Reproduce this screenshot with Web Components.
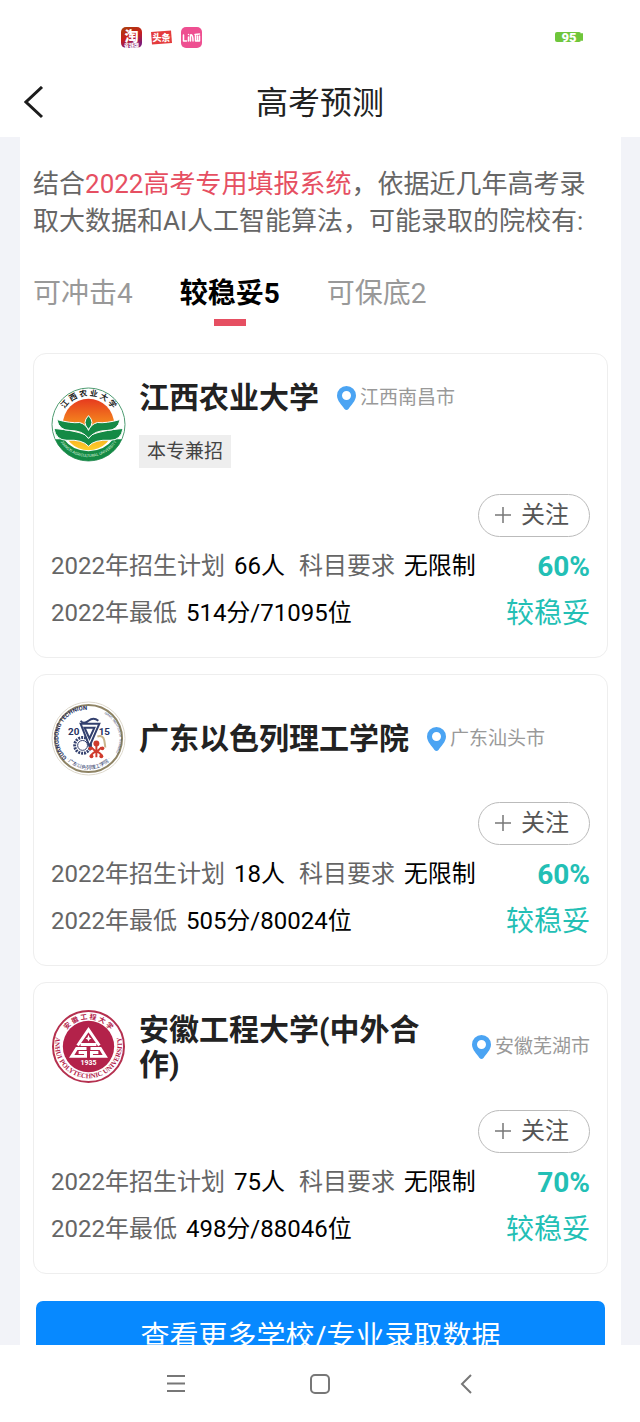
<!DOCTYPE html>
<html lang="zh-CN">
<head>
<meta charset="utf-8">
<meta name="viewport" content="width=device-width, initial-scale=1">
<title>高考预测</title>
<style>
  html, body { height: 100%; }
  body {
    margin: 0;
    display: flex;
    flex-direction: column;
    background: #fff;
    color: #666;
    font-family: Roboto, "Noto Sans CJK SC", sans-serif;
    --red: #e64f62;
    --teal: #23bfb5;
    --blue: #0789ff;
  }
  main {
    flex: 1;
    min-height: 0;
    overflow: hidden;
    background: #f2f3f8;
    padding: 0 19px 0 20px;
  }
</style>
</head>
<body>
  <status-bar level="95"></status-bar>
  <page-header>高考预测</page-header>
  <main>
    <result-panel>
      <span slot="intro">结合<em>2022高考专用填报系统</em>，依据近几年高考录取大数据和AI人工智能算法，可能录取的院校有:</span>
      <tab-strip slot="tabs" items="可冲击4,较稳妥5,可保底2" selected="1"></tab-strip>
      <school-card logo="jiangxi" city="江西南昌市" tag="本专兼招" plan="66人" subject="无限制" lowest="514分/71095位" chance="60%" level="较稳妥">江西农业大学</school-card>
      <school-card logo="guangdong" city="广东汕头市" plan="18人" subject="无限制" lowest="505分/80024位" chance="60%" level="较稳妥">广东以色列理工学院</school-card>
      <school-card logo="anhui" city="安徽芜湖市" plan="75人" subject="无限制" lowest="498分/88046位" chance="70%" level="较稳妥">安徽工程大学(中外合作)</school-card>
      <more-button slot="more">查看更多学校/专业录取数据</more-button>
    </result-panel>
  </main>
  <system-nav></system-nav>

<script>
/** Top system bar: notification icons on the left, battery on the right. */
class StatusBar extends HTMLElement {
  constructor() {
    super();
    this.attachShadow({ mode: 'open' });
  }

  connectedCallback() {
    this.shadowRoot.innerHTML = `
      <style>
        :host { display: flex; flex: none; align-items: center; justify-content: space-between; height: 74px; padding: 0 57px 0 121px; }
        .apps { display: flex; align-items: center; gap: 9px; }
        svg { display: block; overflow: visible; }
        text { font-family: "Noto Sans CJK SC", sans-serif; font-weight: 900; fill: #fff; text-anchor: middle; }
      </style>
      <div class="apps">
        <svg width="21" height="21" viewBox="0 0 21 21">
          <defs><linearGradient id="g" x1="0" y1="0" x2="0.4" y2="1">
            <stop offset="0" stop-color="#a8400c"/><stop offset="0.55" stop-color="#c81e1c"/><stop offset="1" stop-color="#7e1a78"/>
          </linearGradient></defs>
          <rect width="21" height="21" rx="5" fill="url(#g)"/>
          <text x="10.5" y="14" font-size="14">淘</text>
          <text x="10.5" y="20" font-size="5">省钱版</text>
        </svg>
        <svg width="21" height="15" viewBox="0 0 21 15">
          <path d="M0 2L20 0.500L21 13L1 14.500Z" fill="#e43b3c"/>
          <text x="10.500" y="11" font-size="9">头条</text>
        </svg>
        <svg width="21" height="21" viewBox="0 0 21 21">
          <rect width="21" height="21" rx="5" fill="#ee4f91"/>
          <path d="M2.500 8V14H5.500M7.500 10V14M7.500 7.500V7.600M9.500 14V8Q12 7 12 14M14.500 8V14H18.500V9M16.500 9V14M14 7.500L18.500 7" fill="none" stroke="#fff" stroke-width="1.500" stroke-linecap="round" stroke-linejoin="round"/>
        </svg>
      </div>
      <svg width="28" height="12" viewBox="0 0 28 12">
        <rect y="1" width="26" height="10" rx="2" fill="#6fc63b"/>
        <rect x="26" y="2" width="2" height="8" rx="1" fill="#6fc63b"/>
        <text x="14" y="11" font-size="13" style="font-family: Roboto, sans-serif">${this.getAttribute('level')}</text>
      </svg>`;
  }
}

class PageHeader extends HTMLElement {
  constructor() {
    super();
    this.attachShadow({ mode: 'open' });
  }

  connectedCallback() {
    this.shadowRoot.innerHTML = `
      <style>
        :host { display: grid; flex: none; grid-template-columns: 48px 1fr 48px; align-items: center; box-sizing: border-box; height: 63px; padding: 0 10px 5px; }
        button { display: flex; justify-content: center; padding: 0; border: 0; background: none; }
        h1 { margin: 0; color: #222; font-size: 32px; font-weight: 400; line-height: 48px; text-align: center; }
      </style>
      <button aria-label="返回">
        <svg width="20" height="34" viewBox="0 0 20 34"><path d="M18 1L2 16L18 31" fill="none" stroke="#1c1c1c" stroke-width="3"/></svg>
      </button>
      <h1><slot></slot></h1>`;
  }
}

/** White sheet that holds the intro, the tabs, the cards and the button below them. */
class ResultPanel extends HTMLElement {
  constructor() {
    super();
    this.attachShadow({ mode: 'open' });
  }

  connectedCallback() {
    this.shadowRoot.innerHTML = `
      <style>
        :host { display: block; padding: 29px 13px 0; background: #fff; }
        p { margin: 0; font-size: 26px; line-height: 37px; }
        ::slotted([slot="tabs"]) { margin: 33px 0 27px; }
        .list { display: flex; flex-direction: column; gap: 16px; }
        .more { padding: 27px 3px; }
      </style>
      <p><slot name="intro"></slot></p>
      <slot name="tabs"></slot>
      <div class="list"><slot></slot></div>
      <div class="more"><slot name="more"></slot></div>`;
    this.querySelectorAll('em').forEach((em) => {
      em.style.fontStyle = 'normal';
      em.style.color = 'var(--red)';
    });
  }
}

class TabStrip extends HTMLElement {
  constructor() {
    super();
    this.attachShadow({ mode: 'open' });
  }

  connectedCallback() {
    this.render();
    this.shadowRoot.addEventListener('click', (event) => {
      const tab = event.target.closest('button');
      if (tab) {
        this.setAttribute('selected', tab.dataset.index);
        this.render();
      }
    });
  }

  render() {
    const selected = Number(this.getAttribute('selected'));
    const tabs = this.getAttribute('items').split(',').map((item, i) =>
      `<button role="tab" data-index="${i}" aria-selected="${i === selected}">${item}</button>`);
    this.shadowRoot.innerHTML = `
      <style>
        :host { display: block; }
        div { display: flex; gap: 47px; }
        button { display: flex; flex-direction: column; align-items: center; gap: 5px; padding: 0; border: 0; background: none; color: #999; font: inherit; font-size: 28px; line-height: 41px; }
        button::after { content: ""; width: 32px; height: 7px; }
        [aria-selected="true"] { color: #000; font-weight: 700; }
        [aria-selected="true"]::after { background: var(--red); }
      </style>
      <div role="tablist">${tabs.join('')}</div>`;
  }
}

/** Round school emblems, drawn on a 76 unit square. */
const LOGOS = {
  jiangxi: `
    <defs>
      <linearGradient id="sun" x1="0" y1="0" x2="0" y2="1"><stop offset="0" stop-color="#e63a1e"/><stop offset="0.5" stop-color="#f58a1e"/><stop offset="1" stop-color="#fbd02a"/></linearGradient>
      <clipPath id="disc"><circle cx="38" cy="38" r="37"/></clipPath>
      <path id="top" d="M9 38A29 29 0 0 1 67 38"/>
      <path id="low" d="M8 53A34 34 0 0 0 68 53"/>
    </defs>
    <circle cx="38" cy="38" r="37" fill="#fff" stroke="#4c9a70"/>
    <circle cx="38" cy="38" r="26" fill="url(#sun)"/>
    <path d="M0 53H13Q22 65 38 65T63 53H76V76H0Z" fill="#148a45" clip-path="url(#disc)"/>
    <g fill="#148a45" stroke="#fff" stroke-width="1">
      <path d="M3 42Q24 44 34 48Q37 50 38 52Q39 50 42 48Q52 44 73 42Q71 54 60 54Q44 53 38 60Q32 53 16 54Q5 54 3 42Z"/>
      <path d="M6 33Q20 37 29 36Q36 38 38 44Q40 38 47 36Q56 37 70 33Q68 44 57 44Q44 44 38 52Q32 44 19 44Q8 44 6 33Z"/>
      <path d="M38 29Q45 36 38 43Q31 36 38 29Z"/>
    </g>
    <text font-size="8" font-weight="700" fill="#222"><textPath href="#top" startOffset="50%" text-anchor="middle">江 西 农 业 大 学</textPath></text>
    <text font-size="4" fill="#d9f0df"><textPath href="#low" startOffset="50%" text-anchor="middle">JIANGXI AGRICULTURAL UNIVERSITY</textPath></text>`,
  guangdong: `
    <defs>
      <path id="left" d="M17 58A27 27 0 0 1 54 16"/>
      <path id="right" d="M54 13A29 29 0 0 1 66 52"/>
      <path id="low" d="M12 55A31 31 0 0 0 64 55"/>
    </defs>
    <circle cx="38" cy="38" r="37" fill="#fff" stroke="#ddd8cc"/>
    <circle cx="38" cy="38" r="34" fill="none" stroke="#8f8465" stroke-width="2"/>
    <g fill="#26315f">
      <text font-size="6" font-weight="700"><textPath href="#left" startOffset="1">GUANGDONG TECHNION</textPath></text>
      <text font-size="3"><textPath href="#right">ISRAEL INSTITUTE OF TECHNOLOGY</textPath></text>
      <text font-size="5"><textPath href="#low" startOffset="50%" text-anchor="middle">· 广东以色列理工学院 ·</textPath></text>
      <text x="23" y="34" font-size="10" font-weight="700" text-anchor="middle">20</text>
      <text x="54" y="34" font-size="10" font-weight="700" text-anchor="middle">15</text>
    </g>
    <circle cx="32" cy="45" r="8" fill="none" stroke="#33406e" stroke-width="3" stroke-dasharray="2 1"/>
    <circle cx="32" cy="45" r="5" fill="#fff" stroke="#33406e" stroke-width="1"/>
    <path d="M30 23H49L39 46ZM34 27H44L39 38ZM30 20Q33 24 38 20T48 20" fill="#fff" stroke="#33406e" stroke-width="2"/>
    <path d="M47 36Q53 34 54 40T55 47" fill="none" stroke="#c9b48b" stroke-width="2"/>
    <path d="M46 44V57M41 47L46 52L51 47M40 56Q46 47 52 56" fill="none" stroke="#cf3b2d" stroke-width="2"/>
    <g fill="#cf3b2d"><circle cx="46" cy="43" r="3"/><circle cx="40" cy="48" r="2"/><circle cx="52" cy="48" r="2"/><circle cx="41" cy="56" r="2"/><circle cx="51" cy="56" r="2"/></g>`,
  anhui: `
    <defs>
      <path id="top" d="M11 31A28 28 0 0 1 65 31"/>
      <path id="low" d="M5 28A34 34 0 1 0 71 28"/>
    </defs>
    <circle cx="38" cy="38" r="36" fill="#fff" stroke="#b5304f" stroke-width="2"/>
    <circle cx="38" cy="38" r="26" fill="#b3224a"/>
    <g fill="#b3224a">
      <text font-size="7" font-weight="700"><textPath href="#top" startOffset="50%" text-anchor="middle">安 徽 工 程 大 学</textPath></text>
      <text font-size="7" font-family="Liberation Serif, serif" font-weight="700"><textPath href="#low" startOffset="50%" text-anchor="middle">ANHUI POLYTECHNIC UNIVERSITY</textPath></text>
    </g>
    <g fill="none" stroke="#fff" stroke-width="3">
      <path d="M27 37L38 21L49 37M30 36H46"/>
      <path d="M36 40H26L21 48H35V44H28M40 40H50L55 48H41V44H48"/>
    </g>
    <path d="M38 26L39 29L41 30L39 31L38 33L37 31L35 30L37 29Z" fill="#fff"/>
    <text x="38" y="57" font-size="7" font-weight="700" fill="#fff" text-anchor="middle">1935</text>`,
};

class SchoolLogo extends HTMLElement {
  constructor() {
    super();
    this.attachShadow({ mode: 'open' });
  }

  connectedCallback() {
    this.shadowRoot.innerHTML = `
      <style>
        :host { display: block; width: 75px; height: 75px; }
        svg { display: block; width: 100%; height: 100%; }
      </style>
      <svg viewBox="0 0 76 76" aria-hidden="true">${LOGOS[this.getAttribute('name')]}</svg>`;
  }
}

/** Outlined pill that toggles between following and not following a school. */
class FollowButton extends HTMLElement {
  constructor() {
    super();
    this.attachShadow({ mode: 'open' });
  }

  connectedCallback() {
    this.shadowRoot.innerHTML = `
      <style>
        :host { display: block; }
        button { display: flex; align-items: center; gap: 10px; box-sizing: border-box; height: 43px; padding: 0 20px 2px 16px; border: 1px solid #bbb; border-radius: 22px; background: #fff; color: #555; font: inherit; font-size: 24px; line-height: 40px; }
      </style>
      <button aria-pressed="false">
        <svg width="16" height="16" viewBox="0 0 16 16"><path d="M8 0V16M0 8H16" stroke="#777" stroke-width="1.500"/></svg>
        <span>关注</span>
      </button>`;
    const button = this.shadowRoot.querySelector('button');
    button.addEventListener('click', () => {
      button.setAttribute('aria-pressed', button.getAttribute('aria-pressed') !== 'true');
    });
  }
}

class SchoolCard extends HTMLElement {
  constructor() {
    super();
    this.attachShadow({ mode: 'open' });
  }

  connectedCallback() {
    const get = (name) => this.getAttribute(name);

    this.shadowRoot.innerHTML = `
      <style>
        :host { display: block; padding: 26px 17px 20px; border: 1px solid #eee; border-radius: 13px; background: #fff; }
        .head { display: flex; align-items: center; gap: 13px; margin-bottom: 26px; }
        school-logo { flex: none; }
        .info { flex: 1; display: flex; flex-direction: column; align-items: flex-start; gap: 20px; }
        .name { display: flex; align-items: center; justify-content: space-between; gap: 18px; }
        h2 { margin: 0; color: #222; font-size: 30px; font-weight: 700; line-height: 35px; }
        .city { display: flex; flex: none; align-items: center; gap: 4px; color: #999; font-size: 19px; line-height: 28px; }
        .tag { padding: 0 8px; background: #eee; color: #444; font-size: 19px; line-height: 33px; }
        follow-button { width: fit-content; margin: 0 0 6px auto; }
        .row { display: flex; align-items: center; gap: 14px; font-size: 24px; line-height: 47px; }
        .row b { margin-left: 3px; color: #000; font-weight: 400; }
        .row strong { margin-left: auto; color: var(--teal); font-size: 28px; }
        .row .level { font-weight: 400; }
      </style>
      <div class="head">
        <school-logo name="${get('logo')}"></school-logo>
        <div class="info">
          <div class="name">
            <h2><slot></slot></h2>
            <span class="city">
              <svg width="19" height="24" viewBox="0 0 19 24"><path fill="#4ba4f3" fill-rule="evenodd" d="M9.500 0A9.500 9.500 0 0 1 19 9.500C19 15 14 19 11.500 23Q9.500 25 7.500 23C5 19 0 15 0 9.500A9.500 9.500 0 0 1 9.500 0ZM9.500 5A4.500 4.500 0 1 0 9.500 14A4.500 4.500 0 1 0 9.500 5Z"/></svg>
              ${get('city')}
            </span>
          </div>` +
          (get('tag') ? `<span class="tag">${get('tag')}</span>` : ``) +
`        </div>
      </div>
      <follow-button></follow-button>
      <div class="row">
        <span>2022年招生计划 <b>${get('plan')}</b></span>
        <span>科目要求 <b>${get('subject')}</b></span>
        <strong>${get('chance')}</strong>
      </div>
      <div class="row">
        <span>2022年最低 <b>${get('lowest')}</b></span>
        <strong class="level">${get('level')}</strong>
      </div>`;
  }
}

class MoreButton extends HTMLElement {
  constructor() {
    super();
    this.attachShadow({ mode: 'open' });
  }

  connectedCallback() {
    this.shadowRoot.innerHTML = `
      <style>
        :host { display: block; }
        button { display: block; width: 100%; height: 66px; padding: 0; border: 0; border-radius: 7px; background: var(--blue); color: #fff; font: inherit; font-size: 29px; }
      </style>
      <button><slot></slot></button>`;
  }
}

class SystemNav extends HTMLElement {
  constructor() {
    super();
    this.attachShadow({ mode: 'open' });
  }

  connectedCallback() {
    this.shadowRoot.innerHTML = `
      <style>
        :host { display: block; flex: none; }
        nav { display: flex; align-items: center; justify-content: center; gap: 96px; height: 77px; }
        button { display: flex; justify-content: center; width: 48px; padding: 0; border: 0; background: none; }
        svg { fill: none; stroke: #777; stroke-width: 2; }
      </style>
      <nav>
        <button aria-label="菜单"><svg width="20" height="20" viewBox="0 0 20 20"><path d="M1 2H19M1 9.500H19M1 17H19"/></svg></button>
        <button aria-label="主页"><svg width="20" height="20" viewBox="0 0 20 20"><rect x="1" y="1" width="18" height="18" rx="4"/></svg></button>
        <button aria-label="返回"><svg width="20" height="20" viewBox="0 0 20 20"><path d="M17 1L8 10L17 19"/></svg></button>
      </nav>`;
  }
}

customElements.define('status-bar', StatusBar);
customElements.define('page-header', PageHeader);
customElements.define('result-panel', ResultPanel);
customElements.define('tab-strip', TabStrip);
customElements.define('school-logo', SchoolLogo);
customElements.define('follow-button', FollowButton);
customElements.define('school-card', SchoolCard);
customElements.define('more-button', MoreButton);
customElements.define('system-nav', SystemNav);
</script>
</body>
</html>
